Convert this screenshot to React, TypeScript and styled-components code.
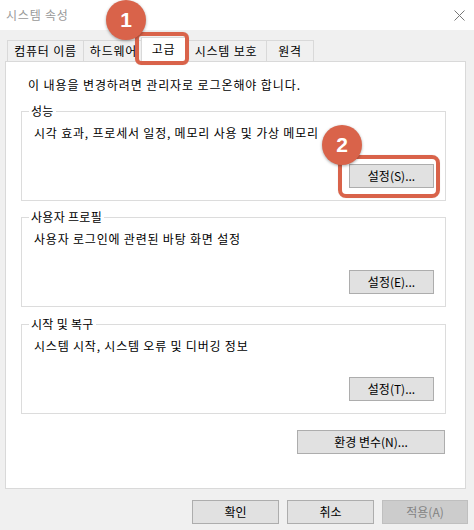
import React from 'react';
import styled, { createGlobalStyle } from 'styled-components';

const Global = createGlobalStyle`
  html, body { margin: 0; padding: 0; background: #f0f0f0; }
  body {
    font-family: "Noto Sans CJK KR", "Noto Sans", sans-serif;
    font-size: 12px;
    color: #000;
  }
  * { box-sizing: border-box; }
`;

const Window = styled.div`
  position: relative;
  width: 474px;
  height: 530px;
  background: #f0f0f0;
  display: flex;
  flex-direction: column;
  overflow: hidden;
`;

const TitleBar = styled.div`
  height: 30px;
  flex: none;
  background: #fff;
  display: flex;
  align-items: center;
  justify-content: space-between;
  padding: 0 9px 0 6px;
`;

const Title = styled.span`
  color: #999;
  font-size: 12px;
  line-height: 16px;
  letter-spacing: 0.8px;
`;

const Body = styled.div`
  padding: 7px 8px 0 5px;
  display: flex;
  flex-direction: column;
`;

const TabStrip = styled.div`
  display: flex;
  align-items: flex-end;
  height: 24px;
  padding-left: 2px;
`;

const Tab = styled.div<{ $w: number; $active?: boolean }>`
  width: ${(p) => p.$w}px;
  height: ${(p) => (p.$active ? 25 : 21)}px;
  margin-left: ${(p) => (p.$active ? -3 : -1)}px;
  margin-bottom: ${(p) => (p.$active ? -1 : 0)}px;
  border: 1px solid #d9d9d9;
  border-bottom: none;
  background: ${(p) => (p.$active ? '#fff' : '#f0f0f0')};
  position: relative;
  z-index: ${(p) => (p.$active ? 2 : 1)};
  display: flex;
  align-items: center;
  justify-content: center;
  padding-bottom: ${(p) => (p.$active ? 2 : 0)}px;
  line-height: 16px;
  letter-spacing: 0.8px;
  white-space: nowrap;
  &:first-child { margin-left: 0; }
`;

const Panel = styled.div`
  width: 461px;
  height: 428px;
  border: 1px solid #d9d9d9;
  background: #fff;
  padding: 15px 19px 0 15px;
  display: flex;
  flex-direction: column;
  position: relative;
  z-index: 0;
`;

const Notice = styled.div`
  margin-left: 7px;
  line-height: 16px;
  letter-spacing: 0.9px;
  white-space: nowrap;
`;

const Group = styled.section<{ $mt: number }>`
  margin-top: ${(p) => p.$mt}px;
  padding: 0 11px 12px 12px;
  border: 1px solid #dcdcdc;
  display: flex;
  flex-direction: column;
`;

const GroupLabel = styled.div`
  align-self: flex-start;
  margin: -9px 0 0 -5px;
  padding: 0 2px;
  background: #fff;
  line-height: 16px;
  letter-spacing: 0.3px;
  white-space: nowrap;
`;

const Desc = styled.div`
  margin-top: 6px;
  line-height: 16px;
  letter-spacing: 0.8px;
  white-space: nowrap;
`;

const ButtonRow = styled.div<{ $mt: number }>`
  margin-top: ${(p) => p.$mt}px;
  display: flex;
  justify-content: flex-end;
  gap: 8px;
`;

const Button = styled.button<{ $w: number; $disabled?: boolean }>`
  width: ${(p) => p.$w}px;
  height: 24px;
  padding: 0;
  margin: 0;
  font-family: inherit;
  font-size: 12px;
  line-height: 16px;
  color: ${(p) => (p.$disabled ? '#838383' : '#000')};
  background: ${(p) => (p.$disabled ? '#cccccc' : '#e1e1e1')};
  border: 1px solid ${(p) => (p.$disabled ? '#bfbfbf' : '#adadad')};
  border-radius: 0;
`;

const EnvRow = styled.div`
  margin-top: 16px;
  margin-right: 1px;
  display: flex;
  justify-content: flex-end;
`;

const Footer = styled.div`
  display: flex;
  justify-content: flex-end;
  gap: 8px;
  padding: 11px 6px 0 0;
`;

const Badge = styled.div<{ $x: number; $y: number }>`
  position: absolute;
  left: ${(p) => p.$x}px;
  top: ${(p) => p.$y}px;
  width: 40px;
  height: 40px;
  border-radius: 50%;
  background: #d9634a;
  box-shadow: 0 1px 3px rgba(0, 0, 0, 0.35);
  color: #fff;
  font-family: "Liberation Sans", Arial, sans-serif;
  font-weight: bold;
  font-size: 21px;
  display: flex;
  align-items: center;
  justify-content: center;
  z-index: 10;
`;

const Highlight = styled.div<{ $x: number; $y: number; $w: number; $h: number; $r: number }>`
  position: absolute;
  left: ${(p) => p.$x}px;
  top: ${(p) => p.$y}px;
  width: ${(p) => p.$w}px;
  height: ${(p) => p.$h}px;
  border: 4px solid #d9634a;
  border-radius: ${(p) => p.$r}px;
  z-index: 9;
  box-shadow: 0 0 1px rgba(0, 0, 0, 0.2);
`;

const CloseIcon = () => (
  <svg width="11" height="11" viewBox="0 0 11 11">
    <path d="M0.5 0.5 L10.5 10.5 M10.5 0.5 L0.5 10.5" stroke="#777" strokeWidth="1" fill="none" />
  </svg>
);

const groups = [
  { title: '성능', desc: '시각 효과, 프로세서 일정, 메모리 사용 및 가상 메모리', btn: '설정(S)...', mt: 18 },
  { title: '사용자 프로필', desc: '사용자 로그인에 관련된 바탕 화면 설정', btn: '설정(E)...', mt: 16 },
  { title: '시작 및 복구', desc: '시스템 시작, 시스템 오류 및 디버깅 정보', btn: '설정(T)...', mt: 17 },
];

const tabs = [
  { label: '컴퓨터 이름', w: 77 },
  { label: '하드웨어', w: 61 },
  { label: '고급', w: 45, active: true },
  { label: '시스템 보호', w: 82 },
  { label: '원격', w: 48 },
];

export default function App() {
  return (
    <Window>
      <Global />
      <TitleBar>
        <Title>시스템 속성</Title>
        <CloseIcon />
      </TitleBar>
      <Body>
        <TabStrip>
          {tabs.map((t) => (
            <Tab key={t.label} $w={t.w} $active={t.active}>
              {t.label}
            </Tab>
          ))}
        </TabStrip>
        <Panel>
          <Notice>이 내용을 변경하려면 관리자로 로그온해야 합니다.</Notice>
          {groups.map((g) => (
            <Group key={g.title} $mt={g.mt}>
              <GroupLabel>{g.title}</GroupLabel>
              <Desc>{g.desc}</Desc>
              <ButtonRow $mt={23}>
                <Button $w={85}>{g.btn}</Button>
              </ButtonRow>
            </Group>
          ))}
          <EnvRow>
            <Button $w={148}>환경 변수(N)...</Button>
          </EnvRow>
        </Panel>
      </Body>
      <Footer>
        <Button $w={87}>확인</Button>
        <Button $w={87}>취소</Button>
        <Button $w={86} $disabled>적용(A)</Button>
      </Footer>
      <Highlight $x={135} $y={32} $w={54} $h={33} $r={6} />
      <Badge $x={106} $y={0}>1</Badge>
      <Highlight $x={338} $y={155} $w={102} $h={43} $r={8} />
      <Badge $x={322} $y={125}>2</Badge>
    </Window>
  );
}
